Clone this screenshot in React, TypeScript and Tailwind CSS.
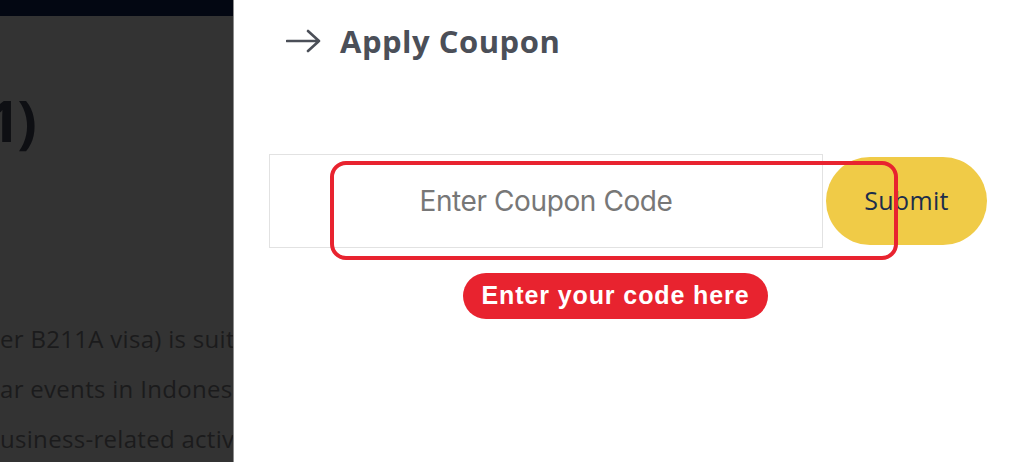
import React from 'react';

const BODY_LINES = [
  'er B211A visa) is suitable for',
  'ar events in Indonesia such as',
  'usiness-related activities and',
];

function ArrowRight() {
  return (
    <svg width="36" height="24" viewBox="0 0 36 24" fill="none">
      <path d="M1 12h32M22 2l11 10-11 10" stroke="#4b4f58" strokeWidth="2.6" strokeLinecap="round" strokeLinejoin="round" />
    </svg>
  );
}

export default function App() {
  return (
    <div className="flex w-[1024px] h-[462px] overflow-hidden bg-white">
      {/* Page behind the drawer, dimmed */}
      <div className="w-[234px] shrink-0 flex flex-col bg-[#333333] overflow-hidden border-r border-[#8c8c8c]">
        <div className="h-[16px] bg-[#030712] shrink-0" />
        <div
          className="mt-[69px] -ml-[13px] text-[58px] leading-[70px] font-bold text-[#0e0f13] whitespace-nowrap tracking-[-3px]"
          style={{ fontFamily: '"Open Sans", sans-serif' }}
        >
          1)
        </div>
        <div
          className="mt-[159px] flex flex-col whitespace-nowrap text-[24px] leading-[50px] text-[#1b1b1c] tracking-[0.3px]"
          style={{ fontFamily: '"Open Sans", sans-serif' }}
        >
          {BODY_LINES.map(l => (
            <div key={l}>{l}</div>
          ))}
        </div>
      </div>

      {/* Drawer */}
      <div className="flex-1 flex flex-col px-[35px]">
        <div className="flex items-center gap-[18px] ml-[17px] mt-[21px] h-[40px]">
          <ArrowRight />
          <div
            className="text-[31px] font-bold text-[#4b4f58] tracking-[0.5px]"
            style={{ fontFamily: '"Open Sans", sans-serif' }}
          >
            Apply Coupon
          </div>
        </div>

        <div className="relative mt-[93px] flex items-center gap-[3px]">
          <input
            placeholder="Enter Coupon Code"
            className="w-[554px] h-[94px] border border-[#e2e2e2] text-center text-[28px] text-[#333] placeholder:text-[#777] outline-none tracking-[-0.4px]"
            style={{ fontFamily: 'Inter, sans-serif' }}
          />
          <button
            className="w-[161px] h-[88px] rounded-full bg-[#f0cb47] text-[25px] text-[#1c2d4b] font-medium tracking-[0.3px]"
            style={{ fontFamily: '"Open Sans", sans-serif' }}
          >
            Submit
          </button>

          {/* annotation overlays */}
          <div className="absolute left-[61px] top-[7px] w-[568px] h-[99px] border-[4px] border-[#e8232f] rounded-[16px] pointer-events-none" />
          <div
            className="absolute left-[194px] top-[119px] w-[305px] h-[46px] rounded-full bg-[#e8232f] flex items-center justify-center text-white text-[25px] font-bold tracking-[0.9px]"
            style={{ fontFamily: '"Liberation Sans", Arial, sans-serif' }}
          >
            Enter your code here
          </div>
        </div>
      </div>
    </div>
  );
}
